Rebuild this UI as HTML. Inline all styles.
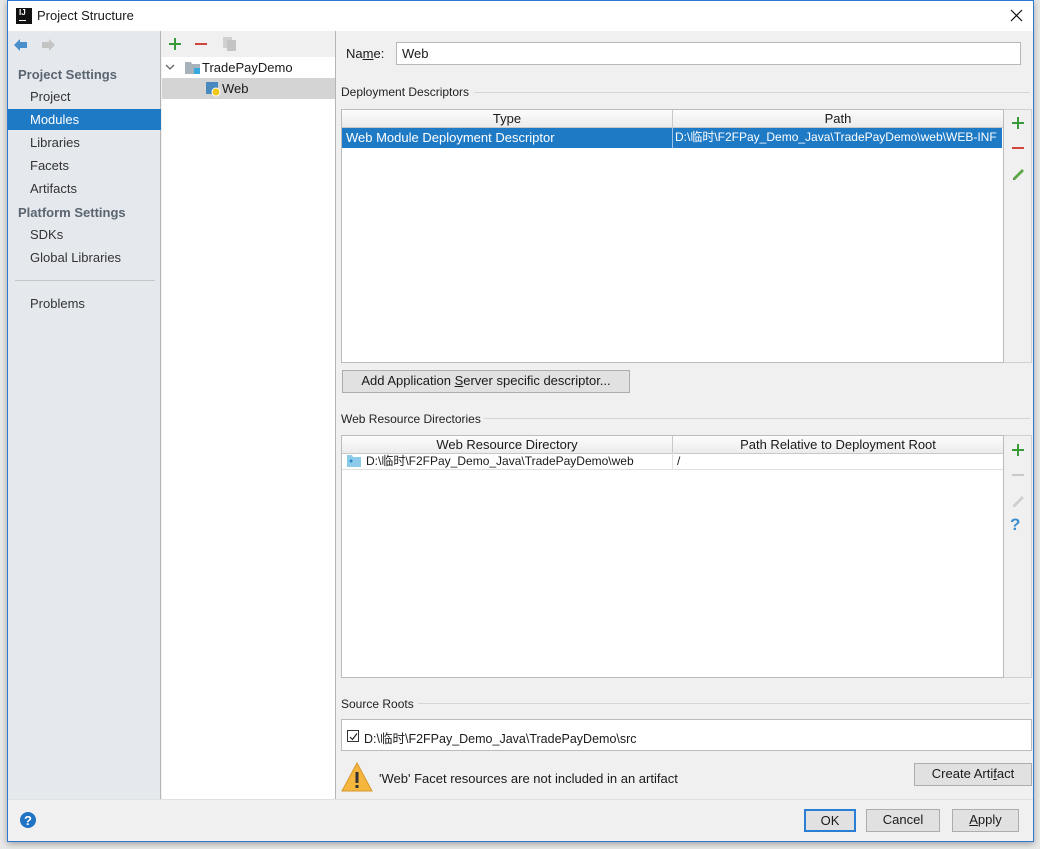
<!DOCTYPE html>
<html><head><meta charset="utf-8"><style>
*{box-sizing:border-box;margin:0;padding:0}
body{width:1040px;height:849px;overflow:hidden;background:#e8e8e8;font-family:"Segoe UI","Liberation Sans","Noto Sans CJK SC",sans-serif;font-size:13px;color:#1a1a1a;position:relative}
.a{position:absolute}
.btn{position:absolute;border:1px solid #adadad;background:#e1e1e1;text-align:center;font-size:13px}
.sb div{position:absolute;left:30px;color:#333}
.hdr{position:absolute;height:18px;background:linear-gradient(#fdfdfd,#ececec);border-bottom:1px solid #c8c8c8;text-align:center;line-height:17px}
.sec{position:absolute;left:341px;font-size:12px;color:#222}
.secl{position:absolute;height:1px;background:#d5d5d5}
</style></head><body>
<div class="a" style="left:7px;top:0;width:1027px;height:842px;background:#f0f0f0;border:1px solid #2b79d0;box-shadow:0 2px 6px rgba(0,0,0,.3)"></div>
<!-- title -->
<div class="a" style="left:8px;top:1px;width:1025px;height:30px;background:#fff"></div>
<div class="a" style="left:16px;top:8px;width:16px;height:16px;background:#111"><div class="a" style="left:3px;top:0;color:#fff;font-size:8px;font-weight:bold">IJ</div><div class="a" style="left:3px;top:12px;width:7px;height:1px;background:#fff"></div></div>
<div class="a" style="left:37px;top:8px;font-size:13px">Project Structure</div>
<svg class="a" style="left:1010px;top:9px" width="13" height="13"><path d="M1 1L12 12M12 1L1 12" stroke="#111" stroke-width="1.2"/></svg>
<!-- sidebar -->
<div class="a" style="left:8px;top:31px;width:153px;height:768px;background:#e5e9ee;border-right:1px solid #b5b5b5"></div>
<svg class="a" style="left:13px;top:38px" width="16" height="14"><path d="M1 7L7 1V4H14V10H7V13Z" fill="#4a8fcb"/></svg>
<svg class="a" style="left:41px;top:38px" width="16" height="14"><path d="M14 7L8 1V4H1V10H8V13Z" fill="#c4c4c4"/></svg>
<div class="a" style="left:18px;top:67px;font-weight:bold;color:#5a6570">Project Settings</div>
<div class="sb">
<div style="top:89px">Project</div>
<div style="left:8px!important;top:109px;width:153px;height:21px;background:#1f7ac6"></div>
<div style="top:112px;color:#fff">Modules</div>
<div style="top:135px">Libraries</div>
<div style="top:158px">Facets</div>
<div style="top:181px">Artifacts</div>
<div style="top:227px">SDKs</div>
<div style="top:250px">Global Libraries</div>
<div style="top:296px">Problems</div>
</div>
<div class="a" style="left:18px;top:205px;font-weight:bold;color:#5a6570">Platform Settings</div>
<div class="a" style="left:15px;top:280px;width:140px;height:1px;background:#c4c6c8"></div>
<!-- tree -->
<div class="a" style="left:162px;top:31px;width:174px;height:768px;background:#fff;border-right:1px solid #b5b5b5"></div>
<div class="a" style="left:162px;top:31px;width:173px;height:26px;background:#f0f0f0"></div>
<svg class="a" style="left:168px;top:37px" width="14" height="14"><path d="M7 1V13M1 7H13" stroke="#3a9a3a" stroke-width="2"/></svg>
<svg class="a" style="left:194px;top:37px" width="14" height="14"><path d="M1 7H13" stroke="#d0463c" stroke-width="2"/></svg>
<svg class="a" style="left:222px;top:36px" width="16" height="16"><rect x="1" y="1" width="9" height="11" fill="#d0d0d0"/><rect x="5" y="4" width="9" height="11" fill="#c4c4c4"/></svg>
<svg class="a" style="left:165px;top:63px" width="10" height="8"><path d="M1 2L5 6L9 2" stroke="#666" fill="none" stroke-width="1.3"/></svg>
<svg class="a" style="left:185px;top:61px" width="16" height="14"><path d="M0 1H6L7 3H15V13H0Z" fill="#a8b2bb"/><rect x="9" y="7" width="6" height="6" fill="#38a8e0"/></svg>
<div class="a" style="left:202px;top:60px">TradePayDemo</div>
<div class="a" style="left:162px;top:78px;width:173px;height:21px;background:#d4d4d4"></div>
<svg class="a" style="left:205px;top:81px" width="16" height="16"><rect x="1" y="1" width="12" height="12" fill="#4a88c0"/><circle cx="11" cy="11" r="4" fill="#f2c618" stroke="#fff"/></svg>
<div class="a" style="left:222px;top:81px">Web</div>
<!-- right -->
<div class="a" style="left:346px;top:46px">Na<u>m</u>e:</div>
<div class="a" style="left:396px;top:42px;width:625px;height:23px;background:#fff;border:1px solid #b8b8b8;padding:3px 5px">Web</div>
<div class="sec" style="top:85px">Deployment Descriptors</div>
<div class="secl" style="left:474px;top:92px;width:556px"></div>
<div class="a" style="left:341px;top:109px;width:663px;height:254px;background:#fff;border:1px solid #bcbcbc"></div>
<div class="hdr" style="left:342px;top:110px;width:331px;border-right:1px solid #c8c8c8">Type</div>
<div class="hdr" style="left:673px;top:110px;width:330px">Path</div>
<div class="a" style="left:342px;top:128px;width:660px;height:20px;background:#1f7ac6;color:#fff;line-height:19px;overflow:hidden;white-space:nowrap"><span style="position:absolute;left:4px">Web Module Deployment Descriptor</span><span style="position:absolute;left:330px;top:0;width:1px;height:20px;background:#9ec3e6"></span><span style="position:absolute;left:333px;font-size:12px">D:\临时\F2FPay_Demo_Java\TradePayDemo\web\WEB-INF</span></div>
<div class="a" style="left:1004px;top:109px;width:28px;height:254px;background:#f0f0f0;border:1px solid #d0d0d0;border-left:none"></div>
<svg class="a" style="left:1011px;top:116px" width="14" height="14"><path d="M7 1V13M1 7H13" stroke="#3a9a3a" stroke-width="2"/></svg>
<svg class="a" style="left:1011px;top:141px" width="14" height="14"><path d="M1 7H13" stroke="#d0463c" stroke-width="2"/></svg>
<svg class="a" style="left:1011px;top:166px" width="14" height="14"><path d="M2 12L11 3L13 5L4 14H2Z" fill="#5aa845"/><path d="M2 12V14H4Z" fill="#666"/></svg>
<div class="btn" style="left:342px;top:370px;width:288px;height:23px;line-height:20px">Add Application <u>S</u>erver specific descriptor...</div>
<div class="sec" style="top:412px">Web Resource Directories</div>
<div class="secl" style="left:484px;top:418px;width:546px"></div>
<div class="a" style="left:341px;top:435px;width:663px;height:243px;background:#fff;border:1px solid #bcbcbc"></div>
<div class="hdr" style="left:342px;top:436px;width:331px;border-right:1px solid #c8c8c8">Web Resource Directory</div>
<div class="hdr" style="left:673px;top:436px;width:330px">Path Relative to Deployment Root</div>
<div class="a" style="left:342px;top:453px;width:661px;height:17px;border-bottom:1px solid #e0e0e0;font-size:12px;line-height:16px;white-space:nowrap"><svg style="position:absolute;left:5px;top:2px" width="14" height="12"><path d="M0 0H5L6 2H14V12H0Z" fill="#8ccbe9"/><circle cx="4" cy="6" r="1.5" fill="#2a8ac8"/></svg><span style="position:absolute;left:24px">D:\临时\F2FPay_Demo_Java\TradePayDemo\web</span><span style="position:absolute;left:330px;width:1px;height:17px;background:#e0e0e0"></span><span style="position:absolute;left:335px">/</span></div>
<div class="a" style="left:1004px;top:435px;width:28px;height:243px;background:#f0f0f0;border:1px solid #d0d0d0;border-left:none"></div>
<svg class="a" style="left:1011px;top:443px" width="14" height="14"><path d="M7 1V13M1 7H13" stroke="#3a9a3a" stroke-width="2"/></svg>
<svg class="a" style="left:1011px;top:468px" width="14" height="14"><path d="M1 7H13" stroke="#c8c8c8" stroke-width="2"/></svg>
<svg class="a" style="left:1011px;top:493px" width="14" height="14"><path d="M2 12L11 3L13 5L4 14H2Z" fill="#cfcfcf"/></svg>
<div class="a" style="left:1010px;top:515px;color:#3b8fd0;font-weight:bold;font-size:17px">?</div>
<div class="sec" style="top:697px">Source Roots</div>
<div class="secl" style="left:418px;top:703px;width:612px"></div>
<div class="a" style="left:341px;top:719px;width:691px;height:32px;background:#fff;border:1px solid #bcbcbc"></div>
<div class="a" style="left:347px;top:730px;width:12px;height:12px;border:1px solid #333;background:#fff"><svg style="position:absolute;left:1px;top:1px" width="9" height="9"><path d="M1 5L3.5 7.5L8 1.5" stroke="#222" fill="none" stroke-width="1.2"/></svg></div>
<div class="a" style="left:364px;top:728px;font-size:12.5px">D:\临时\F2FPay_Demo_Java\TradePayDemo\src</div>
<svg class="a" style="left:341px;top:762px" width="32" height="30"><path d="M16 1L31 29H1Z" fill="#f4b63c" stroke="#d9962a"/><rect x="14.5" y="10" width="3" height="11" fill="#333"/><rect x="14.5" y="23" width="3" height="3" fill="#333"/></svg>
<div class="a" style="left:379px;top:771px">'Web' Facet resources are not included in an artifact</div>
<div class="btn" style="left:914px;top:763px;width:118px;height:23px;line-height:20px">Create Arti<u>f</u>act</div>
<!-- bottom -->
<div class="a" style="left:8px;top:799px;width:1025px;height:1px;background:#e0e0e0"></div>
<svg class="a" style="left:19px;top:811px" width="18" height="18"><circle cx="9" cy="9" r="8" fill="#1f72c4"/><text x="9" y="14" fill="#fff" font-size="13" font-weight="bold" text-anchor="middle" font-family="Liberation Sans">?</text></svg>
<div class="btn" style="left:804px;top:809px;width:52px;height:23px;line-height:20px;border:2px solid #2a7fd4">OK</div>
<div class="btn" style="left:866px;top:809px;width:74px;height:23px;line-height:20px">Cancel</div>
<div class="btn" style="left:952px;top:809px;width:67px;height:23px;line-height:20px"><u>A</u>pply</div>
</body></html>
